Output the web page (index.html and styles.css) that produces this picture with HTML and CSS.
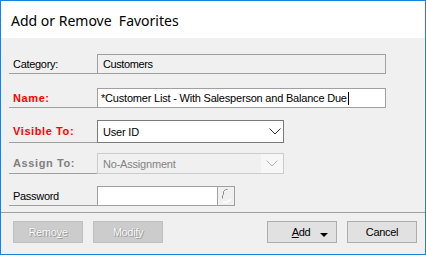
FILE: index.html
```html
<!DOCTYPE html>
<html lang="en">
  <head>
    <meta charset="UTF-8" />
    <title>Add or Remove Favorites</title>
    <link rel="stylesheet" href="styles.css">
  </head>
  <body>
    <div class="window">
      <div class="title-bar">
        <div class="title-text">Add or Remove  Favorites</div>
      </div>

      <div class="form">
        <div class="row row-category">
          <div class="label">Category:</div>
          <div class="field field-readonly">Customers</div>
        </div>

        <div class="row row-name">
          <div class="label label-required">Name:</div>
          <div class="field field-input wide">*Customer List - With Salesperson and Balance Due<span class="caret"></span></div>
        </div>

        <div class="row row-visible">
          <div class="label label-required">Visible To:</div>
          <div class="field combo">
            <span class="combo-text">User ID</span>
            <svg class="chevron" width="12" height="7" viewBox="0 0 12 7">
              <polyline points="0.5,0.5 6,6 11.5,0.5" fill="none" stroke="#333" stroke-width="1" />
            </svg>
          </div>
        </div>

        <div class="row row-assign">
          <div class="label label-disabled">Assign To:</div>
          <div class="field combo combo-disabled">
            <span class="combo-text">No-Assignment</span>
            <span class="combo-button">
              <svg class="chevron" width="12" height="7" viewBox="0 0 12 7">
                <polyline points="0.5,0.5 6,6 11.5,0.5" fill="none" stroke="#b0b0b0" stroke-width="1" />
              </svg>
            </span>
          </div>
        </div>

        <div class="row row-password">
          <div class="label">Password</div>
          <div class="password-group">
            <div class="field field-input password"></div>
            <div class="key-button">
              <svg width="16" height="18" viewBox="0 0 16 18">
                <path d="M9.5,2.5 L7.5,2.5 L5.5,4.5 L5.5,7.5 L4.5,8.5 L4.5,11.5" fill="none" stroke="#8a8a8a" stroke-width="1" />
                <path d="M5,15 L8.5,15.5 L13,12" fill="none" stroke="#ffffff" stroke-width="1.4" />
              </svg>
            </div>
          </div>
        </div>
      </div>

      <div class="footer">
        <button class="btn" disabled>Remo<u>v</u>e</button>
        <button class="btn" disabled>Modi<u>f</u>y</button>
        <div class="spacer"></div>
        <button class="btn btn-add"><u>A</u>dd<span class="drop"></span></button>
        <button class="btn">Cancel</button>
      </div>
    </div>
  </body>
</html>
```

FILE: styles.css
```css
html,
body {
  margin: 0;
  padding: 0;
}

body {
  font-family: "Liberation Sans", Arial, sans-serif;
  font-size: 11px;
  color: #000;
  background: #f0f0f0;
}

.window {
  width: 426px;
  height: 255px;
  box-sizing: border-box;
  border: 1px solid #1883d7;
  background: #f0f0f0;
  display: flex;
  flex-direction: column;
}

.title-bar {
  height: 37px;
  background: #ffffff;
  display: flex;
  align-items: center;
  padding-left: 10px;
}

.title-text {
  font-family: "Noto Sans", "Open Sans", sans-serif;
  font-size: 14px;
  color: #000;
  white-space: pre;
  margin-top: 1px;
}

.form {
  padding: 0 0 0 8px;
  display: flex;
  flex-direction: column;
}

.row {
  display: flex;
  align-items: stretch;
}

.row-category {
  margin-top: 16px;
  height: 20px;
}

.row-name {
  margin-top: 14px;
  height: 20px;
}

.row-visible {
  margin-top: 12px;
  height: 23px;
}

.row-assign {
  margin-top: 10px;
  height: 21px;
}

.row-password {
  margin-top: 12px;
  height: 20px;
}

.label {
  width: 88px;
  box-sizing: border-box;
  border-bottom: 1px solid #a0a0a0;
  padding-left: 4px;
  display: flex;
  align-items: center;
  letter-spacing: -0.3px;
}

.label-required {
  color: #ff0000;
  font-weight: bold;
  letter-spacing: 0.6px;
}

.label-disabled {
  color: #7f7f7f;
  font-weight: bold;
  letter-spacing: 0.6px;
}

.field {
  box-sizing: border-box;
  border: 1px solid #a0a0a0;
  display: flex;
  align-items: center;
  padding-left: 5px;
  letter-spacing: -0.2px;
  white-space: nowrap;
}

.field-readonly {
  width: 289px;
  background: #f0f0f0;
  letter-spacing: -0.4px;
}

.field-input {
  background: #ffffff;
  padding-left: 3px;
}

.wide {
  width: 289px;
}

.caret {
  display: inline-block;
  width: 1px;
  height: 13px;
  background: #000;
  margin-left: 1px;
}

.combo {
  width: 187px;
  background: #ffffff;
  border-color: #7a7a7a;
  justify-content: space-between;
  padding-right: 2px;
}

.combo-disabled {
  background: #f0f0f0;
  border-color: #cccccc;
  color: #838383;
  padding-right: 0;
}

.combo-button {
  width: 22px;
  align-self: stretch;
  display: flex;
  align-items: center;
  justify-content: center;
  background: #f7f7f7;
}

.chevron {
  display: block;
}

.password-group {
  display: flex;
}

.password {
  width: 121px;
}

.key-button {
  width: 17px;
  box-sizing: border-box;
  border: 1px solid #a0a0a0;
  border-left: none;
  background: #f0f0f0;
  display: flex;
  align-items: center;
  justify-content: center;
}

.footer {
  margin-top: 6px;
  border-top: 1px solid #a0a0a0;
  padding: 8px 8px 0 12px;
  display: flex;
  gap: 10px;
}

.spacer {
  flex: 1;
}

.btn {
  width: 70px;
  height: 22px;
  box-sizing: border-box;
  border: 1px solid #adadad;
  background: #e1e1e1;
  font-family: "Liberation Sans", Arial, sans-serif;
  font-size: 11px;
  letter-spacing: -0.3px;
  color: #000;
  padding: 0;
  position: relative;
}

.btn:disabled {
  background: #cccccc;
  border-color: #bfbfbf;
  color: #ffffff;
  text-shadow: 0 0 1px #8a8a8a, 1px 1px 0 #a0a0a0;
}

.btn-add {
  padding-right: 2px;
}

.drop {
  position: absolute;
  right: 8px;
  top: 11px;
  width: 0;
  height: 0;
  border-left: 4px solid transparent;
  border-right: 4px solid transparent;
  border-top: 4px solid #000;
}
```
